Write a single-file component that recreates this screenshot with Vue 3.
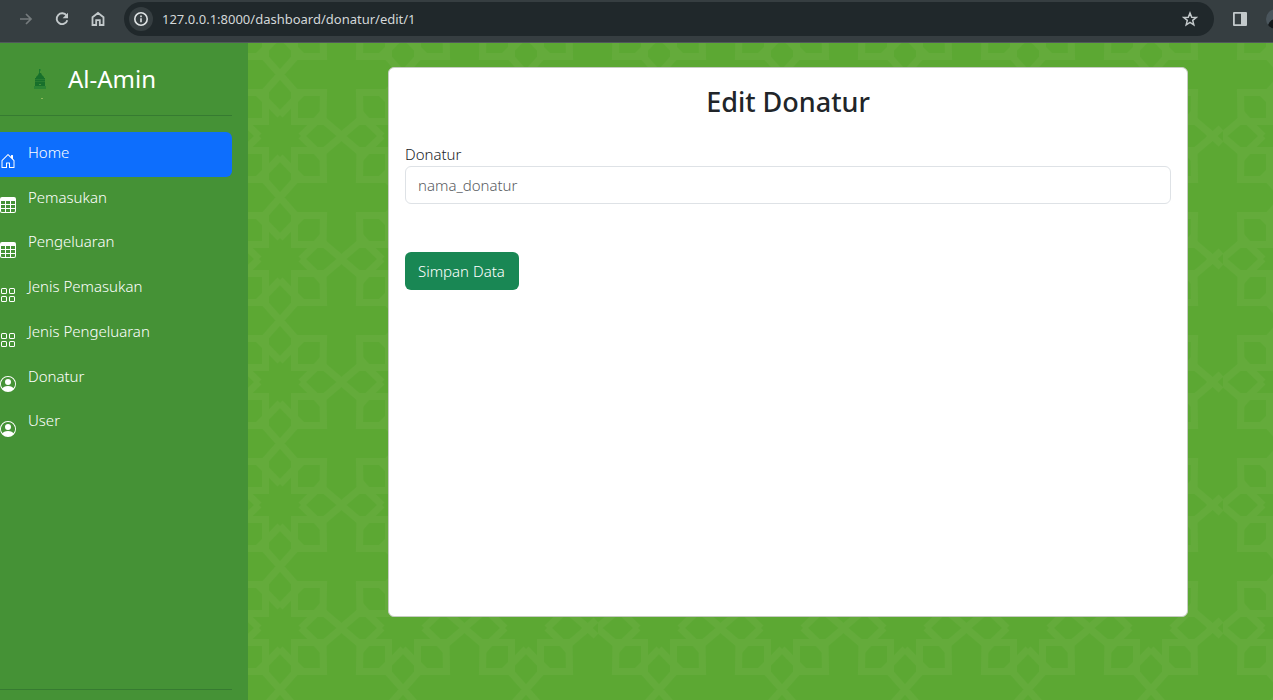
<script setup>
import { ref } from 'vue'

const url = ref('127.0.0.1:8000/dashboard/donatur/edit/1')
const donatur = ref('')

const menu = [
  { label: 'Home', icon: 'home', active: true },
  { label: 'Pemasukan', icon: 'table' },
  { label: 'Pengeluaran', icon: 'table' },
  { label: 'Jenis Pemasukan', icon: 'grid' },
  { label: 'Jenis Pengeluaran', icon: 'grid' },
  { label: 'Donatur', icon: 'person' },
  { label: 'User', icon: 'person' },
]

const icons = {
  home: 'M8.354 1.146a.5.5 0 0 0-.708 0l-6 6A.5.5 0 0 0 1.5 7.5v7a.5.5 0 0 0 .5.5h4.5a.5.5 0 0 0 .5-.5v-4h2v4a.5.5 0 0 0 .5.5H14a.5.5 0 0 0 .5-.5v-7a.5.5 0 0 0-.146-.354L13 5.793V2.5a.5.5 0 0 0-.5-.5h-1a.5.5 0 0 0-.5.5v1.293L8.354 1.146zM2.5 14V7.707l5.5-5.5 5.5 5.5V14H10v-4a.5.5 0 0 0-.5-.5h-3a.5.5 0 0 0-.5.5v4H2.5z',
  table: 'M0 2a2 2 0 0 1 2-2h12a2 2 0 0 1 2 2v12a2 2 0 0 1-2 2H2a2 2 0 0 1-2-2V2zm15 2h-4v3h4V4zm0 4h-4v3h4V8zm0 4h-4v3h3a1 1 0 0 0 1-1v-2zm-5 3v-3H6v3h4zm-5 0v-3H1v2a1 1 0 0 0 1 1h3zm-4-4h4V8H1v3zm0-4h4V4H1v3zm5-3v3h4V4H6zm4 4H6v3h4V8z',
  grid: 'M1 2.500A1.500 1.500 0 0 1 2.500 1h3A1.500 1.500 0 0 1 7 2.500v3A1.500 1.500 0 0 1 5.500 7h-3A1.500 1.500 0 0 1 1 5.500v-3zM2.500 2a.5.5 0 0 0-.5.5v3a.5.5 0 0 0 .5.5h3a.5.5 0 0 0 .5-.5v-3a.5.5 0 0 0-.5-.5h-3zm6.500.5A1.500 1.500 0 0 1 10.500 1h3A1.500 1.500 0 0 1 15 2.500v3A1.500 1.500 0 0 1 13.500 7h-3A1.500 1.500 0 0 1 9 5.500v-3zm1.500-.5a.5.5 0 0 0-.5.5v3a.5.5 0 0 0 .5.5h3a.5.5 0 0 0 .5-.5v-3a.5.5 0 0 0-.5-.5h-3zM1 10.500A1.500 1.500 0 0 1 2.500 9h3A1.500 1.500 0 0 1 7 10.500v3A1.500 1.500 0 0 1 5.500 15h-3A1.500 1.500 0 0 1 1 13.500v-3zm1.500-.5a.5.5 0 0 0-.5.5v3a.5.5 0 0 0 .5.5h3a.5.5 0 0 0 .5-.5v-3a.5.5 0 0 0-.5-.5h-3zm6.500.5A1.500 1.500 0 0 1 10.500 9h3a1.500 1.500 0 0 1 1.500 1.500v3a1.500 1.500 0 0 1-1.500 1.500h-3A1.500 1.500 0 0 1 9 13.500v-3zm1.500-.5a.5.5 0 0 0-.5.5v3a.5.5 0 0 0 .5.5h3a.5.5 0 0 0 .5-.5v-3a.5.5 0 0 0-.5-.5h-3z',
  person: 'M11 6a3 3 0 1 1-6 0 3 3 0 0 1 6 0zM0 8a8 8 0 1 1 16 0A8 8 0 0 1 0 8zm8-7a7 7 0 0 0-5.468 11.370C3.242 11.226 4.805 10 8 10s4.757 1.225 5.468 2.370A7 7 0 0 0 8 1z',
}

const columns = [61, 184, 307, 430, 553]
</script>

<template>
  <div class="page">
    <header class="browser">
      <button class="tool dim" aria-label="Forward">
        <svg viewBox="0 0 16 16" width="16" height="16" fill="none" stroke="currentColor" stroke-width="1.7"><path d="M2 8h11M8 3l5 5-5 5" /></svg>
      </button>
      <button class="tool" aria-label="Reload">
        <svg viewBox="0 0 16 16" width="16" height="16" fill="none" stroke="currentColor" stroke-width="1.9"><path d="M12.600 4.700A5.400 5.400 0 1 0 13.300 9.200" /><path d="M14 1.800v5.400H8.600z" fill="currentColor" stroke="none" /></svg>
      </button>
      <button class="tool" aria-label="Home page">
        <svg viewBox="0 0 16 16" width="16" height="16" fill="none" stroke="currentColor" stroke-width="1.8"><path d="M2.500 6.300 8 2l5.500 4.300V14h-3.700V9.200H6.200V14H2.500z" /></svg>
      </button>
      <div class="address">
        <button class="info" aria-label="Site information">
          <svg viewBox="0 0 16 16" width="16" height="16" fill="none" stroke="currentColor" stroke-width="1.6"><circle cx="8" cy="8" r="6.200" /><path d="M8 7.200v4M8 4.600v1.600" /></svg>
        </button>
        <input v-model="url" class="url" type="text" aria-label="Address" />
        <button class="tool" aria-label="Bookmark">
          <svg viewBox="0 0 16 16" width="16" height="16" fill="none" stroke="currentColor" stroke-width="1.5"><path d="M8 2l1.700 4.200 4.500.3-3.500 2.900 1.100 4.400L8 11.400l-3.800 2.400 1.100-4.400L1.800 6.500l4.500-.3z" /></svg>
        </button>
      </div>
      <button class="tool panel" aria-label="Side panel">
        <svg viewBox="0 0 16 16" width="16" height="16"><path fill="currentColor" fill-rule="evenodd" d="M2 1h12a1 1 0 0 1 1 1v12a1 1 0 0 1-1 1H2a1 1 0 0 1-1-1V2a1 1 0 0 1 1-1zm.8 1.800v10.400H9V2.800z" /></svg>
      </button>
      <button class="avatar" aria-label="Profile">
        <svg viewBox="0 0 20 20" width="20" height="20"><circle cx="10" cy="10" r="10" fill="#4a555c" /><path d="M2 16a10 10 0 0 0 16 0q-2-6-8-6t-8 6z" fill="#14181a" /></svg>
      </button>
    </header>

    <div class="body">
      <aside class="sidebar">
        <a class="brand" href="#">
          <svg class="logo" viewBox="0 0 14 34" width="14" height="34">
            <path d="M6 2h1l1 1-1 1v3H6z" fill="#1b7a2e" />
            <path d="M6 6h2l1 2 2 2v3H3v-3l2-2z" fill="#17702b" />
            <path d="M2 11h10v9H2z" fill="#17702b" />
            <path d="M2 12.500h10M2 14.500h10" stroke="#2e8233" stroke-width=".7" />
            <path d="M1 19h12v3H1z" fill="#2b8434" />
            <path d="M6 17h2v1H6z" fill="#45913a" />
            <path d="M8 31h2v1H8z" fill="#8db95b" />
          </svg>
          <span>Al-Amin</span>
        </a>
        <hr />
        <nav>
          <a v-for="item in menu" :key="item.label" href="#" class="item" :class="{ active: item.active }">
            <svg class="glyph" viewBox="0 0 16 16" width="16" height="16"><path fill="currentColor" fill-rule="evenodd" :d="icons[item.icon]" /></svg>
            <span>{{ item.label }}</span>
          </a>
        </nav>
        <hr class="last" />
      </aside>

      <main class="main">
        <svg class="ornament" width="100%" height="100%" aria-hidden="true">
          <defs>
            <g id="motif">
              <g id="half">
                <path d="M0 21 14.500 36V45L0 61.500M0 21-14.500 36V45L0 61.500" />
                <path d="M14.500 14.500H43L43.500 43.500H14.500zM-14.500 14.500H-43L-43.500 43.500H-14.500z" />
                <path class="corner" d="M17 33 25 41H17zM33 17 41 26V17zM-17 33-25 41H-17zM-33 17-41 26V17z" />
              </g>
              <use href="#half" transform="rotate(180)" />
              <path d="M21 0 36 14.500H45L62 0M21 0 36-14.500H45L62 0" />
              <path d="M-21 0-36 14.500H-45L-62 0M-21 0-36-14.500H-45L-62 0" />
            </g>
            <pattern id="stars" x="350" y="31" width="625" height="123" patternUnits="userSpaceOnUse">
              <g fill="none" stroke="#64ab3b" stroke-width="7">
                <use v-for="x in columns" :key="x" href="#motif" :x="x" y="62" />
                <path d="M610 66 623 54M610 58 623 70" />
              </g>
            </pattern>
          </defs>
          <rect width="100%" height="100%" fill="url(#stars)" />
        </svg>

        <section class="card">
          <h1>Edit Donatur</h1>
          <form @submit.prevent>
            <label for="donatur">Donatur</label>
            <input id="donatur" v-model="donatur" type="text" placeholder="nama_donatur" />
            <button type="submit" class="save">Simpan Data</button>
          </form>
        </section>
      </main>
    </div>
  </div>
</template>

<style>
body {
  margin: 0;
  background: #5ca833;
}
</style>

<style scoped>
.page {
  display: flex;
  flex-direction: column;
  min-height: 100vh;
  overflow: hidden;
  font-family: "Noto Sans", "Open Sans", sans-serif;
  font-size: 15px;
  font-weight: 300;
  line-height: 24px;
  color: #212529;
}
.page * {
  box-sizing: border-box;
}
button {
  padding: 0;
  border: 0;
  background: none;
  color: inherit;
  font: inherit;
  cursor: pointer;
}
a {
  color: inherit;
  text-decoration: none;
}
svg {
  display: block;
}

.browser {
  display: flex;
  align-items: center;
  height: 43px;
  padding: 0 0 4px 18px;
  border-bottom: 1px solid #50585b;
  background: #363e41;
  color: #c3c9cb;
  overflow: hidden;
}
.tool {
  flex: none;
  margin-right: 20px;
}
.dim {
  color: #757b7d;
}
.address {
  display: flex;
  flex: 1;
  align-items: center;
  min-width: 0;
  height: 34px;
  margin: 0 18px 0 -2px;
  padding-left: 5px;
  border-radius: 17px;
  background: #20282b;
}
.address .tool {
  margin-right: 16px;
}
.info {
  display: flex;
  flex: none;
  align-items: center;
  justify-content: center;
  width: 24px;
  height: 24px;
  border-radius: 50%;
  background: #363e41;
  color: #dfe3e4;
}
.url {
  flex: 1;
  min-width: 0;
  padding: 0;
  margin-left: 9px;
  border: 0;
  outline: 0;
  background: none;
  color: #d3d7d8;
  font: 400 13px/20px "Noto Sans", "Open Sans", sans-serif;
}
.panel {
  margin-right: 18px;
}
.avatar {
  flex: none;
  width: 7px;
  overflow: hidden;
}

.body {
  display: flex;
  flex: 1;
}
.sidebar {
  display: flex;
  flex: none;
  flex-direction: column;
  width: 248px;
  padding: 16px 16px 10px 0;
  background: #459236;
  color: #fff;
}
.brand {
  display: flex;
  align-items: center;
  gap: 21px;
  height: 40px;
  padding-left: 33px;
  font-size: 24px;
  font-weight: 400;
}
.logo {
  margin-top: 10px;
}
hr {
  width: 100%;
  height: 1px;
  margin: 16px 0;
  border: 0;
  background: #367b31;
}
.last {
  margin: auto 0 0;
}
nav {
  display: flex;
  flex-direction: column;
  min-height: 313px;
}
.item {
  display: flex;
  flex: 1;
  align-items: flex-start;
  gap: 12px;
  padding: 8px 16px 8px 0;
}
.glyph {
  align-self: flex-end;
}
.active {
  border-radius: 0 6px 6px 0;
  background: #0d6efd;
}

.main {
  position: relative;
  flex: 1;
  min-width: 0;
  padding: 24px 85px 24px 140px;
  background: #5ca833;
}
.ornament {
  position: absolute;
  inset: 0;
}
.corner {
  fill: #64ab3b;
  stroke: none;
}
.card {
  position: relative;
  min-height: 550px;
  padding: 16px;
  border: 1px solid #c6cdc2;
  border-radius: 6px;
  background: #fff;
}
h1 {
  margin: 0 0 22px;
  font-size: 27px;
  font-weight: 500;
  line-height: 36px;
  text-align: center;
}
form {
  display: flex;
  flex-direction: column;
  align-items: flex-start;
}
#donatur {
  width: 100%;
  height: 38px;
  margin-bottom: 48px;
  padding: 6px 12px;
  border: 1px solid #dee2e6;
  border-radius: 6px;
  background: #fff;
  color: #212529;
  font: inherit;
}
#donatur::placeholder {
  color: #595c5f;
  opacity: 1;
}
.save {
  height: 38px;
  padding: 0 14px 0 13px;
  border-radius: 6px;
  background: #198754;
  color: #fff;
}
</style>
